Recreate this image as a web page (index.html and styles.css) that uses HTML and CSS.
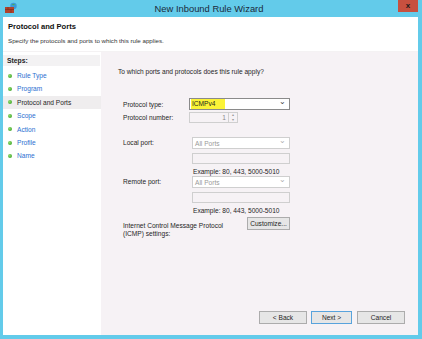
FILE: index.html
```html
<!DOCTYPE html>
<html lang="en">
<head>
  <meta charset="UTF-8">
  <title>New Inbound Rule Wizard</title>
  <link rel="stylesheet" href="styles.css">
</head>
<body>
  <div class="window">
    <div class="titlebar">
      <svg class="app-icon" width="14" height="12" viewBox="0 0 14 12">
        <!-- firewall brick with globe -->
        <circle cx="9.5" cy="4" r="3.2" fill="#3a9ad9"/>
        <path d="M7.5 2.5 q2 -1 3.5 0 q-1 1.5 -3.5 0z" fill="#4caf50"/>
        <rect x="1" y="5" width="9" height="6" fill="#b0432d"/>
        <path d="M1 7.5 h9 M4 5 v2.5 M7 7.5 v3.5" stroke="#7a2a1a" stroke-width="0.6"/>
      </svg>
      <div class="title">New Inbound Rule Wizard</div>
      <div class="close">x</div>
    </div>
    <div class="frame">
      <div class="header">
        <div class="header-title">Protocol and Ports</div>
        <div class="header-sub">Specify the protocols and ports to which this rule applies.</div>
      </div>
      <div class="main">
        <div class="steps">
          <div class="steps-label">Steps:</div>
          <ul class="step-list">
            <li class="step"><span class="dot"></span>Rule Type</li>
            <li class="step"><span class="dot"></span>Program</li>
            <li class="step current"><span class="dot"></span>Protocol and Ports</li>
            <li class="step"><span class="dot"></span>Scope</li>
            <li class="step"><span class="dot"></span>Action</li>
            <li class="step"><span class="dot"></span>Profile</li>
            <li class="step"><span class="dot"></span>Name</li>
          </ul>
        </div>
        <div class="content">
          <p class="question">To which ports and protocols does this rule apply?</p>

          <div class="form">
            <div class="row">
              <label class="label">Protocol type:</label>
              <div class="select active"><span class="hl">ICMPv4</span><span class="chev">&#8964;</span></div>
            </div>
            <div class="row">
              <label class="label">Protocol number:</label>
              <div class="spin"><span class="spin-val">1</span><span class="spin-btns"><span>&#9652;</span><span>&#9662;</span></span></div>
            </div>

            <div class="row port-row">
              <label class="label">Local port:</label>
              <div class="port-fields">
                <div class="select disabled"><span>All Ports</span><span class="chev">&#8964;</span></div>
                <div class="textbox"></div>
                <div class="example">Example: 80, 443, 5000-5010</div>
              </div>
            </div>

            <div class="row port-row">
              <label class="label">Remote port:</label>
              <div class="port-fields">
                <div class="select disabled"><span>All Ports</span><span class="chev">&#8964;</span></div>
                <div class="textbox"></div>
                <div class="example">Example: 80, 443, 5000-5010</div>
              </div>
            </div>

            <div class="row icmp-row">
              <label class="label icmp-label">Internet Control Message Protocol<br>(ICMP) settings:</label>
              <button class="btn customize">Customize...</button>
            </div>
          </div>

          <div class="footer">
            <button class="btn">&lt; Back</button>
            <button class="btn next">Next &gt;</button>
            <button class="btn cancel">Cancel</button>
          </div>
        </div>
      </div>
    </div>
  </div>
</body>
</html>
```

FILE: styles.css
```css
body {
  margin: 0;
  background-color: #63cbea;
  font-family: "Liberation Sans", Arial, sans-serif;
  font-size: 6.6px;
  color: #1e1e1e;
}
.window {
  width: 422px;
  height: 339px;
  display: flex;
  flex-direction: column;
  background-color: #63cbea;
}
.titlebar {
  height: 17px;
  display: flex;
  align-items: flex-start;
}
.app-icon {
  margin: 2px 0 0 4px;
}
.title {
  flex: 1;
  text-align: center;
  font-size: 9.4px;
  line-height: 17px;
  color: #1b2a3a;
  margin-left: 2px;
}
.close {
  width: 20px;
  height: 12px;
  margin-right: 4px;
  background-color: #c7503f;
  color: #1a1a1a;
  font-weight: bold;
  font-size: 8px;
  text-align: center;
  line-height: 11px;
}
.frame {
  flex: 1;
  margin: 0 4px 4px 3px;
  background-color: #ffffff;
  display: flex;
  flex-direction: column;
}
.header {
  height: 35px;
  padding: 2px 0 0 5px;
  box-sizing: border-box;
  border-bottom: 1px solid #f4f2f3;
}
.header-title {
  font-weight: bold;
  font-size: 7.6px;
  line-height: 12px;
  margin-top: 2px;
  color: #111;
}
.header-sub {
  font-size: 6.2px;
  margin-top: 4px;
  color: #333;
}
.main {
  flex: 1;
  display: flex;
}
.steps {
  width: 98px;
  background-color: #ffffff;
  padding-top: 3px;
}
.steps-label {
  background-color: #f3f2f3;
  font-weight: bold;
  font-size: 6.8px;
  line-height: 11px;
  padding-left: 4px;
  margin-right: 1px;
}
.step-list {
  list-style: none;
  margin: 3px 0 0 0;
  padding: 0;
}
.step {
  height: 13.4px;
  line-height: 13.4px;
  display: flex;
  align-items: center;
  color: #2a6fd1;
  padding-left: 5px;
}
.step.current {
  background-color: #efedee;
  color: #1e1e1e;
}
.dot {
  width: 4px;
  height: 4px;
  border-radius: 50%;
  background: radial-gradient(circle at 35% 35%, #8fdc6a, #2f9a1e);
  margin-right: 5px;
}
.content {
  flex: 1;
  background-color: #f6f2f5;
  display: flex;
  flex-direction: column;
  padding: 0 13px 0 17px;
}
.question {
  margin: 16px 0 0 0;
  font-size: 6.6px;
}
.form {
  margin-top: 23px;
  padding-left: 5px;
  display: flex;
  flex-direction: column;
}
.row {
  display: flex;
  align-items: center;
}
.label {
  width: 66px;
}
.select {
  width: 101px;
  height: 12px;
  box-sizing: border-box;
  border: 1px solid #8a8a8a;
  background-color: #ffffff;
  display: flex;
  align-items: center;
  justify-content: space-between;
  padding: 0 3px 0 1px;
}
.select.disabled {
  border-color: #cfcfcf;
  color: #9a9a9a;
  width: 98px;
  padding-left: 2px;
}
.hl {
  background-color: #fbf337;
  padding: 0 10px 0 1px;
  line-height: 10px;
}
.chev {
  font-size: 8px;
  line-height: 8px;
  margin-top: -4px;
  color: #444;
}
.disabled .chev {
  color: #b0b0b0;
}
.row + .row {
  margin-top: 2px;
}
.spin {
  width: 49px;
  height: 11px;
  box-sizing: border-box;
  border: 1px solid #cfcfcf;
  background-color: #f6f2f5;
  display: flex;
  color: #8a8a8a;
}
.spin-val {
  flex: 1;
  text-align: right;
  padding-right: 2px;
  line-height: 9px;
}
.spin-btns {
  width: 8px;
  border-left: 1px solid #cfcfcf;
  display: flex;
  flex-direction: column;
  font-size: 4px;
  line-height: 4.5px;
  text-align: center;
  color: #999;
}
.port-row {
  align-items: flex-start;
}
.row.port-row {
  margin-top: 14px;
}
.row.port-row + .port-row {
  margin-top: 0;
}
.port-row .label {
  line-height: 12px;
  width: 69px;
}
.port-fields {
  display: flex;
  flex-direction: column;
}
.textbox {
  width: 98px;
  height: 11px;
  box-sizing: border-box;
  border: 1px solid #cfcfcf;
  margin-top: 4px;
  background-color: #f6f2f5;
}
.example {
  margin-top: 3px;
  line-height: 9px;
  padding-left: 1px;
}
.row.icmp-row {
  margin-top: 2px;
  align-items: flex-start;
}
.icmp-label {
  width: 124px;
  line-height: 7.5px;
  padding-top: 5px;
}
.btn {
  font-family: "Liberation Sans", Arial, sans-serif;
  font-size: 6.6px;
  color: #1e1e1e;
  background-color: #e6e6e6;
  border: 1px solid #acacac;
  height: 13px;
  padding: 0;
  margin: 0;
}
.customize {
  width: 43px;
}
.footer {
  margin-top: auto;
  margin-bottom: 11px;
  display: flex;
  justify-content: flex-end;
  gap: 4px;
}
.footer .btn {
  width: 48px;
}
.footer .next {
  width: 41px;
  border-color: #58a3dc;
  margin-right: 1px;
}
.footer .cancel {
  width: 48px;
}
```
